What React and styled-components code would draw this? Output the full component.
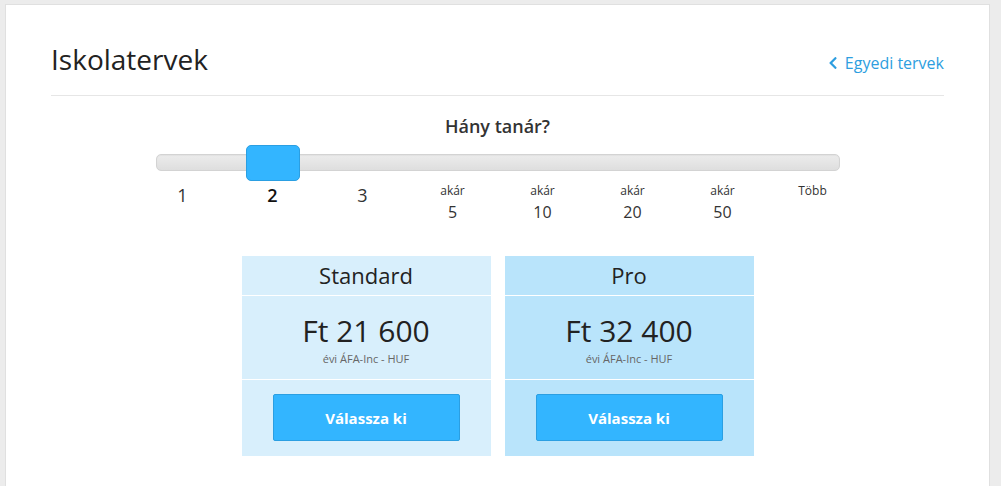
import React, { useState } from 'react';
import styled, { createGlobalStyle } from 'styled-components';
import { FaChevronLeft } from 'react-icons/fa';

const GlobalStyle = createGlobalStyle`
  html, body {
    margin: 0;
    padding: 0;
    background: #ececec;
    font-family: 'Open Sans', 'Noto Sans', sans-serif;
    color: #222;
  }
`;

// 페이지 카드
const Panel = styled.div`
  margin: 4px 11px 0 5px;
  background: white;
  border: 1px solid #e0e0e0;
  border-bottom: none;
  padding: 38px 45px 30px;
  min-height: 460px;
  box-sizing: border-box;
`;

const Header = styled.div`
  display: flex;
  justify-content: space-between;
  align-items: baseline;
  padding-bottom: 20px;
  border-bottom: 1px solid #e6e6e6;

  h2 {
    margin: 0;
    font-size: 28px;
    line-height: 32px;
    font-weight: 400;
    color: #222;
  }
`;

const BackLink = styled.a`
  display: flex;
  align-items: center;
  gap: 5px;
  color: #2d9ee0;
  font-size: 16px;
  text-decoration: none;
  cursor: pointer;

  svg {
    font-size: 14px;
  }
`;

const SliderBlock = styled.div`
  width: 720px;
  margin: 0 auto;
`;

const Question = styled.div`
  margin-top: 18px;
  text-align: center;
  font-size: 18px;
  line-height: 24px;
  font-weight: 600;
  color: #333;
`;

const TrackWrap = styled.div`
  position: relative;
  height: 36px;
  box-sizing: border-box;
  margin-top: 7px;
  padding: 9px 18px 0;
`;

const Track = styled.div`
  height: 17px;
  box-sizing: border-box;
  border: 1px solid #d3d3d3;
  border-radius: 5px;
  background: linear-gradient(#ececec, #dedede);
  box-shadow: inset 0 1px 1px rgba(0, 0, 0, 0.04);
`;

const Handle = styled.div`
  position: absolute;
  top: 0;
  width: 54px;
  height: 36px;
  box-sizing: border-box;
  background: #33b5ff;
  border: 1px solid #2b9fe2;
  border-radius: 5px;
  cursor: grab;
`;

const Labels = styled.ul`
  display: grid;
  grid-template-columns: repeat(8, 90px);
  margin: 2px 0 0;
  padding: 0;
  list-style: none;
`;

const Label = styled.li`
  text-align: center;
  color: ${(p) => (p.$active ? '#111' : '#333')};
  font-weight: ${(p) => (p.$active ? 600 : 400)};
  cursor: pointer;

  .big {
    font-size: 18px;
    line-height: 24px;
  }

  .small {
    font-size: 12px;
    line-height: 16px;
  }

  .num {
    margin-top: 2px;
    font-size: 16px;
    line-height: 22px;
  }
`;

const Plans = styled.div`
  display: flex;
  justify-content: center;
  gap: 14px;
  margin-top: 33px;
`;

const Plan = styled.div`
  width: 249px;
  background: ${(p) => (p.$pro ? '#b9e4fb' : '#d8effc')};
  text-align: center;
`;

const PlanName = styled.div`
  height: 39px;
  line-height: 39px;
  font-size: 22px;
  font-weight: 500;
  color: #222;
  border-bottom: 1px solid white;
`;

const PlanPrice = styled.div`
  height: 84px;
  box-sizing: border-box;
  padding-top: 17px;
  border-bottom: 1px solid white;

  .price {
    font-size: 30px;
    line-height: 36px;
    font-weight: 500;
    color: #222;
  }

  .note {
    margin-top: 3px;
    font-size: 11px;
    line-height: 14px;
    color: #666;
  }
`;

const PlanAction = styled.div`
  padding: 14px 31px 15px;
`;

const SelectButton = styled.button`
  width: 100%;
  height: 47px;
  background: #33b5ff;
  border: 1px solid #2b9fe2;
  border-radius: 2px;
  color: white;
  font-family: inherit;
  font-size: 15px;
  font-weight: 700;
  cursor: pointer;
`;

const steps = [
  { value: '1' },
  { value: '2' },
  { value: '3' },
  { value: '5', prefix: 'akár' },
  { value: '10', prefix: 'akár' },
  { value: '20', prefix: 'akár' },
  { value: '50', prefix: 'akár' },
  { value: 'Több', small: true },
];

const plans = [
  { name: 'Standard', price: 'Ft 21 600' },
  { name: 'Pro', price: 'Ft 32 400', pro: true },
];

const App = () => {
  const [step, setStep] = useState(1);

  return (
    <>
      <GlobalStyle />
      <Panel>
        <Header>
          <h2>Iskolatervek</h2>
          <BackLink>
            <FaChevronLeft />
            Egyedi tervek
          </BackLink>
        </Header>

        <SliderBlock>
          <Question>Hány tanár?</Question>
          <TrackWrap>
            <Track />
            <Handle style={{ left: 18 + step * 90 }} />
          </TrackWrap>
          <Labels>
            {steps.map((s, i) => (
              <Label key={s.value} $active={i === step} onClick={() => setStep(i)}>
                {s.prefix ? (
                  <>
                    <div className="small">{s.prefix}</div>
                    <div className="num">{s.value}</div>
                  </>
                ) : (
                  <div className={s.small ? 'small' : 'big'}>{s.value}</div>
                )}
              </Label>
            ))}
          </Labels>
        </SliderBlock>

        <Plans>
          {plans.map((plan) => (
            <Plan key={plan.name} $pro={plan.pro}>
              <PlanName>{plan.name}</PlanName>
              <PlanPrice>
                <div className="price">{plan.price}</div>
                <div className="note">évi ÁFA-Inc - HUF</div>
              </PlanPrice>
              <PlanAction>
                <SelectButton>Válassza ki</SelectButton>
              </PlanAction>
            </Plan>
          ))}
        </Plans>
      </Panel>
    </>
  );
};

export default App;
